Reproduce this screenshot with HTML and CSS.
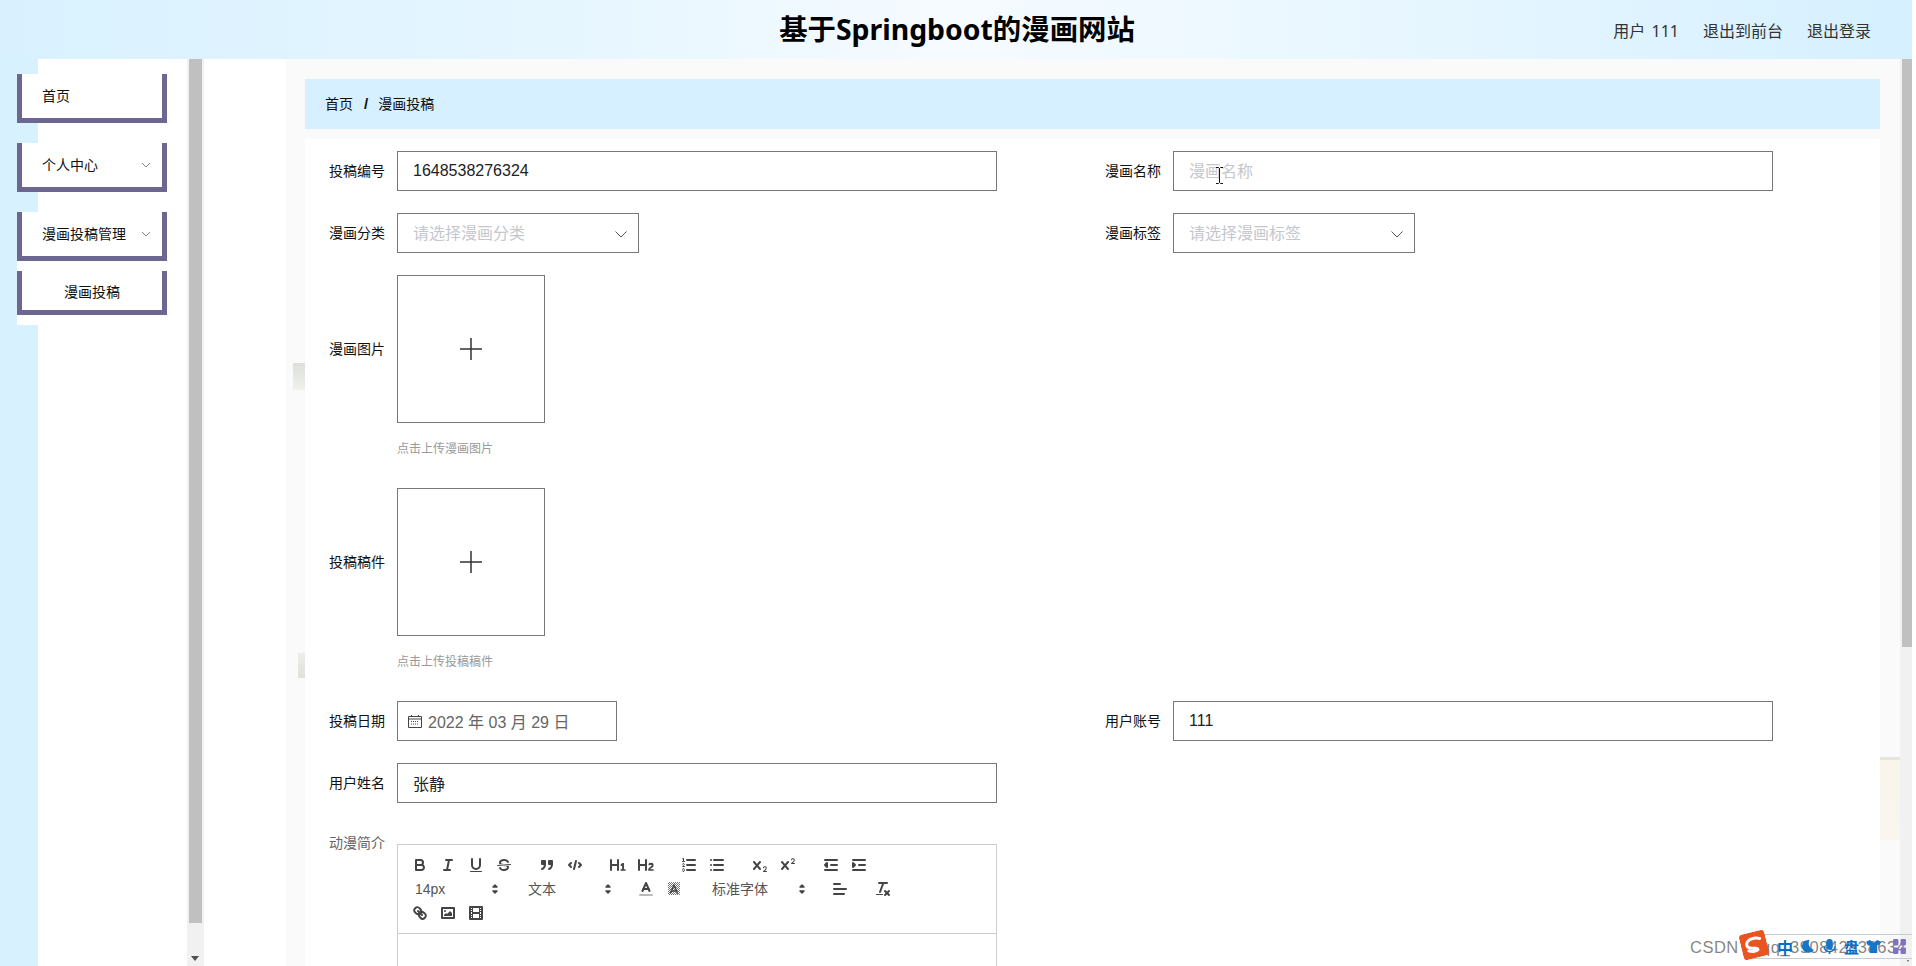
FILE: index.html
```html
<!DOCTYPE html>
<html lang="zh-CN">
  <head>
    <meta charset="UTF-8" />
    <title>基于Springboot的漫画网站</title>
    <link rel="stylesheet" href="styles.css">
  </head>
  <body>
    <!-- Icons from the rich text toolbar -->
    <svg class="icon-defs" aria-hidden="true">
      <defs>
        <pattern id="hatch" width="2" height="2" patternUnits="userSpaceOnUse">
          <rect width="1" height="1" fill="#777" />
          <rect x="1" y="1" width="1" height="1" fill="#777" />
        </pattern>
      </defs>
    </svg>

    <!-- Header -->
    <header class="topbar">
      <h1 class="site-title">基于Springboot的漫画网站</h1>
      <nav class="user-links">
        <span class="user-name">用户 111</span>
        <a href="#">退出到前台</a>
        <a href="#">退出登录</a>
      </nav>
    </header>

    <div class="layout">
      <!-- Side menu -->
      <aside class="sidebar">
        <ul class="menu">
          <li class="menu-item"><span>首页</span></li>
          <li class="menu-item">
            <span>个人中心</span>
            <svg class="chevron" viewBox="0 0 12 12"><polyline points="2 4 6 8 10 4" /></svg>
          </li>
          <li class="menu-item">
            <span>漫画投稿管理</span>
            <svg class="chevron" viewBox="0 0 12 12"><polyline points="2 4 6 8 10 4" /></svg>
          </li>
          <li class="submenu">
            <div class="menu-item sub-item"><span>漫画投稿</span></div>
          </li>
        </ul>
        <div class="scrollbar side-scroll">
          <div class="thumb"></div>
          <div class="arrow"></div>
        </div>
      </aside>

      <!-- Main content -->
      <main class="content">
        <div class="panel">
          <div class="breadcrumb">
            <span>首页</span><b>/</b><span>漫画投稿</span>
          </div>

          <form class="form">
            <div class="form-row two-col">
              <div class="field">
                <label>投稿编号</label>
                <div class="input wide value">1648538276324</div>
              </div>
              <div class="field">
                <label>漫画名称</label>
                <div class="input wide placeholder">漫画名称</div>
                <svg class="text-cursor" viewBox="0 0 9 17"><path d="M1 .5h2.5l1 1 1-1H8M4.5 1.5v14M1 16.5h2.5l1-1 1 1H8" /></svg>
              </div>
            </div>

            <div class="form-row two-col">
              <div class="field">
                <label>漫画分类</label>
                <div class="input select placeholder">
                  请选择漫画分类
                  <svg class="select-arrow" viewBox="0 0 14 14"><polyline points="1.5 4.5 7 10 12.500 4.500" /></svg>
                </div>
              </div>
              <div class="field">
                <label>漫画标签</label>
                <div class="input select placeholder">
                  请选择漫画标签
                  <svg class="select-arrow" viewBox="0 0 14 14"><polyline points="1.5 4.5 7 10 12.500 4.500" /></svg>
                </div>
              </div>
            </div>

            <div class="form-row upload-row">
              <div class="field">
                <label>漫画图片</label>
                <div class="upload-box">
                  <svg class="plus" viewBox="0 0 24 24"><path d="M12 1v22M1 12h22" /></svg>
                </div>
              </div>
              <p class="hint">点击上传漫画图片</p>
            </div>

            <div class="form-row upload-row">
              <div class="field">
                <label>投稿稿件</label>
                <div class="upload-box">
                  <svg class="plus" viewBox="0 0 24 24"><path d="M12 1v22M1 12h22" /></svg>
                </div>
              </div>
              <p class="hint">点击上传投稿稿件</p>
            </div>

            <div class="form-row two-col">
              <div class="field">
                <label>投稿日期</label>
                <div class="input date">
                  <svg class="calendar" viewBox="0 0 14 14"><path d="M.5 2.500h13v11H.5zM.5 5h13M3.500 1v2M10.500 1v2" /><path class="dots" d="M3 7.500h8M3 10h8" /></svg>
                  2022 年 03 月 29 日
                </div>
              </div>
              <div class="field">
                <label>用户账号</label>
                <div class="input wide value">111</div>
              </div>
            </div>

            <div class="form-row">
              <div class="field">
                <label>用户姓名</label>
                <div class="input wide value">张静</div>
              </div>
            </div>

            <div class="form-row editor-row">
              <div class="field editor-field">
                <label class="soft-label">动漫简介</label>
                <div class="editor">
                  <div class="toolbar">
                    <span class="formats">
                      <button type="button"><svg viewBox="0 0 18 18"><path class="st" d="M5,4H9.5A2.5,2.5,0,0,1,12,6.5v0A2.5,2.5,0,0,1,9.5,9H5A0,0,0,0,1,5,9V4A0,0,0,0,1,5,4Z" /><path class="st" d="M5,9h5.5A2.5,2.5,0,0,1,13,11.5v0A2.5,2.5,0,0,1,10.5,14H5a0,0,0,0,1,0,0V9A0,0,0,0,1,5,9Z" /></svg></button>
                      <button type="button"><svg viewBox="0 0 18 18"><line class="st" x1="7" x2="13" y1="4" y2="4" /><line class="st" x1="5" x2="11" y1="14" y2="14" /><line class="st" x1="8" x2="10" y1="14" y2="4" /></svg></button>
                      <button type="button"><svg viewBox="0 0 18 18"><path class="st" d="M5,3V9a4.012,4.012,0,0,0,4,4H9a4.012,4.012,0,0,0,4-4V3" /><rect class="fl" height="1" rx="0.5" ry="0.5" width="12" x="3" y="15" /></svg></button>
                      <button type="button"><svg viewBox="0 0 18 18"><line class="st thin" x1="15.5" x2="2.5" y1="8.5" y2="9.5" /><path class="fl" d="M9.007,8C6.542,7.791,6,7.519,6,6.5,6,5.792,7.283,5,9,5c1.571,0,2.765.679,2.969,1.309a1,1,0,0,0,1.9-.618C13.356,4.106,11.354,3,9,3,6.2,3,4,4.538,4,6.5a3.2,3.2,0,0,0,.5,1.843Z" /><path class="fl" d="M8.984,10C11.457,10.208,12,10.479,12,11.5c0,.708-1.283,1.5-3,1.5-1.571,0-2.765-.679-2.969-1.309a1,1,0,1,0-1.9.618C4.644,13.894,6.646,15,9,15c2.8,0,5-1.538,5-3.5a3.2,3.2,0,0,0-.5-1.843Z" /></svg></button>
                    </span>
                    <span class="formats">
                      <button type="button"><svg viewBox="0 0 18 18"><rect class="fl st" height="3" width="3" x="4" y="5" /><rect class="fl st" height="3" width="3" x="11" y="5" /><path class="st" d="M7,8c0,4.031-3,5-3,5" /><path class="st" d="M14,8c0,4.031-3,5-3,5" /></svg></button>
                      <button type="button"><svg viewBox="0 0 18 18"><polyline class="st" points="5 7 3 9 5 11" /><polyline class="st" points="13 7 15 9 13 11" /><line class="st" x1="10" x2="8" y1="5" y2="13" /></svg></button>
                    </span>
                    <span class="formats">
                      <button type="button"><svg viewBox="0 0 18 18"><path class="fl" d="M10,4V14a1,1,0,0,1-2,0V10H3v4a1,1,0,0,1-2,0V4A1,1,0,0,1,3,4V8H8V4a1,1,0,0,1,2,0Zm6.06787,9.209H14.98975V7.59863a.54085.54085,0,0,0-.605-.60547h-.62744a1.01119,1.01119,0,0,0-.748.29688L11.645,8.56641a.5435.5435,0,0,0-.022.8584l.28613.30762a.53861.53861,0,0,0,.84717.0332l.09912-.08789a1.2137,1.2137,0,0,0,.2417-.35254h.02246s-.01123.30859-.01123.60547V13.209H12.041a.54085.54085,0,0,0-.605.60547v.43945a.54085.54085,0,0,0,.605.60547h4.02686a.54085.54085,0,0,0,.605-.60547v-.43945A.54085.54085,0,0,0,16.06787,13.209Z" /></svg></button>
                      <button type="button"><svg viewBox="0 0 18 18"><path class="fl" d="M16.73975,13.81445v.43945a.54085.54085,0,0,1-.605.60547H11.855a.58392.58392,0,0,1-.64893-.60547V14.0127c0-2.90527,3.39941-3.42187,3.39941-4.55469a.77675.77675,0,0,0-.84717-.78125,1.17684,1.17684,0,0,0-.83594.38477c-.2749.26367-.561.374-.85791.13184l-.4292-.34082c-.30811-.24219-.38525-.51758-.1543-.81445a2.97155,2.97155,0,0,1,2.45361-1.17676,2.45393,2.45393,0,0,1,2.68408,2.40918c0,2.45312-3.1792,2.92676-3.27832,3.93848h2.79443A.54085.54085,0,0,1,16.73975,13.81445ZM9,3A.99974.99974,0,0,0,8,4V8H3V4A1,1,0,0,0,1,4V14a1,1,0,0,0,2,0V10H8v4a1,1,0,0,0,2,0V4A.99974.99974,0,0,0,9,3Z" /></svg></button>
                    </span>
                    <span class="formats">
                      <button type="button"><svg viewBox="0 0 18 18"><line class="st" x1="7" x2="15" y1="4" y2="4" /><line class="st" x1="7" x2="15" y1="9" y2="9" /><line class="st" x1="7" x2="15" y1="14" y2="14" /><line class="st thin" x1="2.5" x2="4.5" y1="5.5" y2="5.5" /><path class="fl" d="M3.5,6A0.5,0.5,0,0,1,3,5.5V3.085l-0.276.138A0.5,0.5,0,0,1,2.053,3c-0.124-.247-0.023-0.324.224-0.447l1-.5A0.5,0.5,0,0,1,4,2.5v3A0.5,0.5,0,0,1,3.5,6Z" /><path class="st thin" d="M4.5,10.5h-2c0-.234,1.85-1.076,1.85-2.234A0.959,0.959,0,0,0,2.5,8.156" /><path class="st thin" d="M2.5,14.846a0.959,0.959,0,0,0,1.85-.109A0.7,0.7,0,0,0,3.75,14a0.688,0.688,0,0,0,.6-0.736,0.959,0.959,0,0,0-1.85-.109" /></svg></button>
                      <button type="button"><svg viewBox="0 0 18 18"><line class="st" x1="6" x2="15" y1="4" y2="4" /><line class="st" x1="6" x2="15" y1="9" y2="9" /><line class="st" x1="6" x2="15" y1="14" y2="14" /><line class="st" x1="3" x2="3" y1="4" y2="4" /><line class="st" x1="3" x2="3" y1="9" y2="9" /><line class="st" x1="3" x2="3" y1="14" y2="14" /></svg></button>
                    </span>
                    <span class="formats">
                      <button type="button"><svg viewBox="0 0 18 18"><path class="fl" d="M15.5,15H13.861a3.858,3.858,0,0,0,1.914-2.975,1.8,1.8,0,0,0-1.6-1.751A1.921,1.921,0,0,0,12.021,11.7a0.50013,0.50013,0,1,0,.957.291h0a0.914,0.914,0,0,1,1.053-.725,0.81,0.81,0,0,1,.744.762c0,1.076-1.16971,1.86982-1.93971,2.43082A1.45639,1.45639,0,0,0,12,15.5a0.5,0.5,0,0,0,.5.5h3A0.5,0.5,0,0,0,15.5,15Z" /><path class="fl" d="M9.65,5.241a1,1,0,0,0-1.409.108L6,7.964,3.759,5.349A1,1,0,0,0,2.192,6.59178Q2.21,6.6,2.241,6.651L4.684,9.5,2.241,12.35A1,1,0,0,0,3.71,13.70722q0.02-.02.049-0.049L6,11.036l2.241,2.614a1,1,0,0,0,1.567-1.243Q9.79,12.4,9.759,12.35L7.316,9.5,9.759,6.651A1,1,0,0,0,9.65,5.241Z" /></svg></button>
                      <button type="button"><svg viewBox="0 0 18 18"><path class="fl" d="M15.5,7H13.861a4.015,4.015,0,0,0,1.914-2.975,1.8,1.8,0,0,0-1.6-1.751A1.922,1.922,0,0,0,12.021,3.7a0.5,0.5,0,1,0,.957.291,0.917,0.917,0,0,1,1.053-.725,0.81,0.81,0,0,1,.744.762c0,1.077-1.164,1.925-1.934,2.486A1.423,1.423,0,0,0,12,7.5a0.5,0.5,0,0,0,.5.5h3A0.5,0.5,0,0,0,15.5,7Z" /><path class="fl" d="M9.651,5.241a1,1,0,0,0-1.41.108L6,7.964,3.759,5.349a1,1,0,1,0-1.519,1.3L4.683,9.5,2.241,12.35a1,1,0,1,0,1.519,1.3L6,11.036l2.241,2.615a1,1,0,0,0,1.519-1.3L7.317,9.5,9.759,6.651A1,1,0,0,0,9.651,5.241Z" /></svg></button>
                    </span>
                    <span class="formats">
                      <button type="button"><svg viewBox="0 0 18 18"><line class="st" x1="3" x2="15" y1="14" y2="14" /><line class="st" x1="3" x2="15" y1="4" y2="4" /><line class="st" x1="9" x2="15" y1="9" y2="9" /><polyline class="fl st" points="5 7 5 11 3 9 5 7" /></svg></button>
                      <button type="button"><svg viewBox="0 0 18 18"><line class="st" x1="3" x2="15" y1="14" y2="14" /><line class="st" x1="3" x2="15" y1="4" y2="4" /><line class="st" x1="9" x2="15" y1="9" y2="9" /><polyline class="fl st" points="3 7 3 11 5 9 3 7" /></svg></button>
                    </span>
                    <span class="formats">
                      <span class="picker size">14px<svg viewBox="0 0 18 18"><polygon class="st arrow-line fl" points="7 11 9 13 11 11 7 11" /><polygon class="st arrow-line fl" points="7 7 9 5 11 7 7 7" /></svg></span>
                    </span>
                    <span class="formats">
                      <span class="picker size">文本<svg viewBox="0 0 18 18"><polygon class="st arrow-line fl" points="7 11 9 13 11 11 7 11" /><polygon class="st arrow-line fl" points="7 7 9 5 11 7 7 7" /></svg></span>
                    </span>
                    <span class="formats">
                      <button type="button"><svg viewBox="0 0 18 18"><line class="st label-line" x1="3" x2="15" y1="15" y2="15" /><polyline class="st" points="5.5 11 9 3 12.5 11" /><line class="st" x1="11.63" x2="6.38" y1="9" y2="9" /></svg></button>
                      <button type="button"><svg viewBox="0 0 18 18"><rect x="3" y="2" width="12" height="13" fill="url(#hatch)" /><polyline class="st thin-2" points="5.5 13 9 5 12.5 13" /><line class="st thin-2" x1="11.63" x2="6.38" y1="11" y2="11" /></svg></button>
                    </span>
                    <span class="formats">
                      <span class="picker font">标准字体<svg viewBox="0 0 18 18"><polygon class="st arrow-line fl" points="7 11 9 13 11 11 7 11" /><polygon class="st arrow-line fl" points="7 7 9 5 11 7 7 7" /></svg></span>
                    </span>
                    <span class="formats">
                      <button type="button"><svg viewBox="0 0 18 18"><line class="st" x1="3" x2="15" y1="9" y2="9" /><line class="st" x1="3" x2="13" y1="14" y2="14" /><line class="st" x1="3" x2="9" y1="4" y2="4" /></svg></button>
                    </span>
                    <span class="formats">
                      <button type="button"><svg viewBox="0 0 18 18"><line class="st" x1="5" x2="13" y1="3" y2="3" /><line class="st" x1="6" x2="9.35" y1="12" y2="3" /><line class="st" x1="11" x2="15" y1="11" y2="15" /><line class="st" x1="15" x2="11" y1="11" y2="15" /><rect class="fl" height="1" rx="0.5" ry="0.5" width="7" x="2" y="14" /></svg></button>
                    </span>
                    <span class="formats">
                      <button type="button"><svg viewBox="0 0 18 18"><line class="st" x1="7" x2="11" y1="7" y2="11" /><path class="st" d="M8.9,4.577a3.476,3.476,0,0,1,.36,4.679A3.476,3.476,0,0,1,4.577,8.9C3.185,7.5,2.035,6.4,4.217,4.217S7.5,3.185,8.9,4.577Z" /><path class="st" d="M13.423,9.1a3.476,3.476,0,0,0-4.679-.36,3.476,3.476,0,0,0,.36,4.679c1.392,1.392,2.5,2.542,4.679.36S14.815,10.5,13.423,9.1Z" /></svg></button>
                      <button type="button"><svg viewBox="0 0 18 18"><rect class="st" height="10" width="12" x="3" y="4" /><circle class="fl" cx="6" cy="7" r="1" /><polyline class="fl" points="5 12 5 11 7 9 8 10 11 7 13 9 13 12 5 12" /></svg></button>
                      <button type="button"><svg viewBox="0 0 18 18"><rect class="st" height="12" width="12" x="3" y="3" /><rect class="fl" height="12" width="1" x="5" y="3" /><rect class="fl" height="12" width="1" x="12" y="3" /><rect class="fl" height="2" width="8" x="5" y="8" /><rect class="fl" height="1" width="3" x="3" y="5" /><rect class="fl" height="1" width="3" x="3" y="7" /><rect class="fl" height="1" width="3" x="3" y="10" /><rect class="fl" height="1" width="3" x="3" y="12" /><rect class="fl" height="1" width="3" x="12" y="5" /><rect class="fl" height="1" width="3" x="12" y="7" /><rect class="fl" height="1" width="3" x="12" y="10" /><rect class="fl" height="1" width="3" x="12" y="12" /></svg></button>
                    </span>
                  </div>
                  <div class="editor-body"></div>
                </div>
              </div>
            </div>
          </form>
        </div>
        <div class="scrollbar page-scroll">
          <div class="thumb"></div>
          <div class="arrow"></div>
        </div>
      </main>
    </div>

    <!-- Screenshot leftovers: input method bar and watermark -->
    <div class="watermark">CSDN @qq_390842838634</div>
    <div class="ime-bar">
      <svg class="ime-logo" viewBox="0 0 26 26"><rect width="26" height="26" rx="4" /><path class="ime-swoosh" d="M20 8C15 5.500 7 6 6 11c-.7 3.500 4 5 8 5.500 2 .3 2.500 2 .5 2.500-2.500.5-6-.2-8-1.500" /></svg>
      <span class="ime-cn">中</span>
      <svg class="ime-icon" viewBox="0 0 14 14"><path d="M9 1a6 6 0 1 0 4 9A6 6 0 0 1 9 1z" /></svg>
      <svg class="ime-icon" viewBox="0 0 14 14"><rect x="4" y="0" width="6" height="10" rx="3" /><path d="M2 7a5 5 0 0 0 10 0M7 12v2" class="ime-line" /></svg>
      <span class="ime-cn ime-small">盘</span>
      <svg class="ime-icon" viewBox="0 0 16 14"><path d="M0 2l4-2 4 3 4-3 4 2-2 4-2-1v9H4V5L2 6z" /></svg>
      <svg class="ime-grid" viewBox="0 0 12 14"><rect width="5" height="6" rx="1" /><rect x="7" width="5" height="6" rx="1" /><rect y="8" width="5" height="6" rx="1" /><rect x="7" y="8" width="5" height="6" rx="1" /></svg>
    </div>
  </body>
</html>
```

FILE: styles.css
```css
/* Global */
* {
  box-sizing: border-box;
}
html, body {
  height: 100%;
}
body {
  margin: 0;
  padding-right: 4px;
  overflow: hidden;
  background: #fff;
  color: #333;
  font-family: "Liberation Sans", "Noto Sans CJK SC", sans-serif;
  font-size: 14px;
}
a {
  color: inherit;
  text-decoration: none;
}
.icon-defs {
  position: absolute;
  width: 0;
  height: 0;
}

/* Header */
.topbar {
  height: 59px;
  display: flex;
  align-items: center;
  justify-content: center;
  position: relative;
  background: linear-gradient(90deg, #d9f1ff 0%, #e6f6ff 30%, #f6fbff 50%, #e6f6ff 75%, #d6f0ff 100%);
}
.site-title {
  margin: 0 0 2px 2px;
  color: #000;
  font-family: "Noto Sans", "Noto Sans CJK SC", sans-serif;
  font-size: 28.4px;
  font-weight: 700;
  line-height: 40px;
}
.user-links {
  position: absolute;
  right: 41px;
  top: 20px;
  display: flex;
  gap: 24px;
  font-family: "Noto Sans", "Noto Sans CJK SC", sans-serif;
  font-size: 16px;
  line-height: 22px;
}
.user-name {
  word-spacing: 2px;
}

/* Layout */
.layout {
  display: flex;
  height: 907px;
}

/* Side menu */
.sidebar {
  width: 204px;
  display: flex;
  background: linear-gradient(90deg, #d8f1ff 38px, #fff 38px);
}
.menu {
  list-style: none;
  width: 187px;
  margin: 0;
  padding: 15px 0 0 17px;
}
.menu-item {
  width: 150px;
  height: 49px;
  margin-bottom: 20px;
  padding: 0 0 3px 20px;
  display: flex;
  align-items: center;
  justify-content: space-between;
  background: #fff;
  border: solid #6c6790;
  border-width: 0 5px 5px;
  color: #111;
  font-size: 14px;
}
.chevron {
  width: 12px;
  height: 12px;
  margin: 2px 10px 0 0;
  fill: none;
  stroke: #888;
  stroke-width: 1;
}
.submenu {
  width: 150px;
  margin-top: -20px;
  padding: 10px 0;
  background: #fff;
}
.sub-item {
  height: 44px;
  margin: 0;
  padding: 0;
  justify-content: center;
}

/* Fake scrollbars */
.scrollbar {
  position: relative;
  background: #f1f1f1;
}
.scrollbar .thumb {
  background: #c0c0c0;
}
.scrollbar .arrow {
  position: absolute;
  bottom: 5px;
  width: 0;
  height: 0;
  border: 4px solid transparent;
  border-top: 5px solid #505050;
  border-bottom: 0;
}
.side-scroll {
  width: 17px;
  padding: 0 2px;
}
.side-scroll .thumb {
  height: 864px;
}
.side-scroll .arrow {
  left: 4px;
}
.page-scroll {
  width: 12px;
  padding-left: 2px;
}
.page-scroll .thumb {
  height: 588px;
}
.page-scroll .arrow {
  left: 7px;
  bottom: 4px;
  border-width: 1px;
  border-top-width: 2px;
}

/* Main content */
.content {
  flex: 1;
  display: flex;
  min-width: 0;
  padding-left: 82px;
  background: #fff;
}
/* faint marks left by the blurred page background */
.panel {
  flex: 1;
  min-width: 0;
  padding: 20px 20px 0 19px;
  background-color: #fafafa;
  background-image:
    linear-gradient(#dcdfda, #eff1ed),
    linear-gradient(#eceee9, #dfe1dc),
    linear-gradient(#e6e6de, #e6e6de),
    linear-gradient(#f9f5ec, #f9f6f0);
  background-repeat: no-repeat;
  background-size: 12px 27px, 7px 25px, 20px 3px, 20px 80px;
  background-position: 7px 304px, 12px 594px, right 0 top 698px, right 0 top 701px;
  overflow: hidden;
}
.breadcrumb {
  height: 50px;
  margin-bottom: 10px;
  padding: 0 0 2px 20px;
  display: flex;
  align-items: center;
  background: #d6f0ff;
  color: #111;
}
.breadcrumb b {
  margin: 0 10px 0 11px;
  font-size: 15px;
  font-weight: 700;
}

/* Form */
.form {
  height: 900px;
  padding: 12px 0 0 24px;
  background: #fff;
}
.form-row {
  margin-bottom: 22px;
}
.two-col {
  display: grid;
  grid-template-columns: 776px 1fr;
}
.field {
  display: flex;
  align-items: center;
  position: relative;
}
.field label {
  width: 56px;
  margin-right: 12px;
  padding-bottom: 2px;
  color: #111;
  font-size: 14px;
  white-space: nowrap;
}
.input {
  height: 40px;
  padding-left: 15px;
  display: flex;
  align-items: center;
  position: relative;
  background: #fff;
  border: 1px solid #777;
  font-size: 16px;
}
.wide {
  width: 600px;
}
.value {
  color: #222;
}
.placeholder {
  padding-bottom: 2px;
  color: #c4c7cd;
}
.select {
  width: 242px;
}
.select-arrow {
  position: absolute;
  right: 10px;
  top: 13px;
  width: 14px;
  height: 14px;
  fill: none;
  stroke: #555;
  stroke-width: 1;
}
.date {
  width: 220px;
  padding-left: 10px;
  gap: 6px;
  color: #666;
}
.calendar {
  width: 14px;
  height: 14px;
  fill: none;
  stroke: #444;
  stroke-width: 1;
}
.calendar .dots {
  stroke-dasharray: 1 1;
}
.text-cursor {
  position: absolute;
  left: 110px;
  top: 16px;
  width: 9px;
  height: 17px;
  fill: none;
  stroke: #111;
  stroke-width: 1;
}

/* Upload boxes */
.upload-row {
  margin-bottom: 0;
}
.upload-box {
  width: 148px;
  height: 148px;
  display: flex;
  align-items: center;
  justify-content: center;
  background: #fff;
  border: 1px solid #777;
}
.plus {
  width: 24px;
  height: 24px;
  fill: none;
  stroke: #333;
  stroke-width: 1.5;
}
.hint {
  height: 65px;
  margin: 0 0 0 68px;
  padding-top: 18px;
  color: #999;
  font-size: 12px;
  line-height: 17px;
}

/* Rich text editor */
.editor-row {
  margin-top: 41px;
}
.editor-field {
  align-items: flex-start;
}
.soft-label {
  margin-top: -12px;
  color: #666 !important;
}
.editor {
  width: 600px;
  border: 1px solid #ccc;
  background: #fff;
}
.toolbar {
  padding: 8px;
  display: flex;
  flex-wrap: wrap;
  border-bottom: 1px solid #ccc;
}
.formats {
  display: flex;
  margin-right: 15px;
}
.toolbar button {
  width: 28px;
  height: 24px;
  padding: 3px 5px;
  background: none;
  border: 0;
}
.toolbar svg {
  display: block;
  width: 18px;
  height: 18px;
}
.st {
  fill: none;
  stroke: #444;
  stroke-width: 2;
  stroke-linecap: round;
  stroke-linejoin: round;
}
.thin {
  stroke-width: 1;
}
.thin-2 {
  stroke-width: 1.5;
}
.arrow-line {
  stroke-width: 1.5;
}
.fl {
  fill: #444;
}
.label-line {
  stroke: #bbb;
}
.picker {
  height: 24px;
  padding-left: 9px;
  display: flex;
  align-items: center;
  justify-content: space-between;
  color: #555;
  font-size: 14px;
  line-height: 24px;
}
.size {
  width: 98px;
}
.font {
  width: 108px;
}
.editor-body {
  height: 200px;
}

/* Input method bar and watermark */
.ime-bar {
  position: absolute;
  left: 1752px;
  top: 934px;
  width: 160px;
  height: 25px;
  padding-left: 24px;
  display: flex;
  align-items: center;
  gap: 7px;
  border: 1px solid #c6ccd6;
  border-right: 0;
}
.ime-logo {
  position: absolute;
  left: -12px;
  top: -3px;
  width: 26px;
  height: 26px;
  fill: #e95420;
  transform: rotate(-14deg);
}
.ime-swoosh {
  fill: none;
  stroke: #fff;
  stroke-width: 3;
  stroke-linecap: round;
}
.ime-cn {
  color: #0a6cc4;
  font-size: 16px;
  font-weight: 700;
}
.ime-small {
  font-size: 15px;
}
.ime-icon {
  width: 15px;
  height: 15px;
  fill: #1476c8;
}
.ime-line {
  fill: none;
  stroke: #1476c8;
  stroke-width: 1.5;
}
.ime-grid {
  width: 13px;
  height: 15px;
  margin-left: 5px;
  fill: #7d72c4;
}
.watermark {
  position: absolute;
  left: 1690px;
  top: 937px;
  color: rgba(110, 110, 110, .85);
  font-size: 16.5px;
  letter-spacing: .5px;
  line-height: 20px;
  white-space: nowrap;
}
```
